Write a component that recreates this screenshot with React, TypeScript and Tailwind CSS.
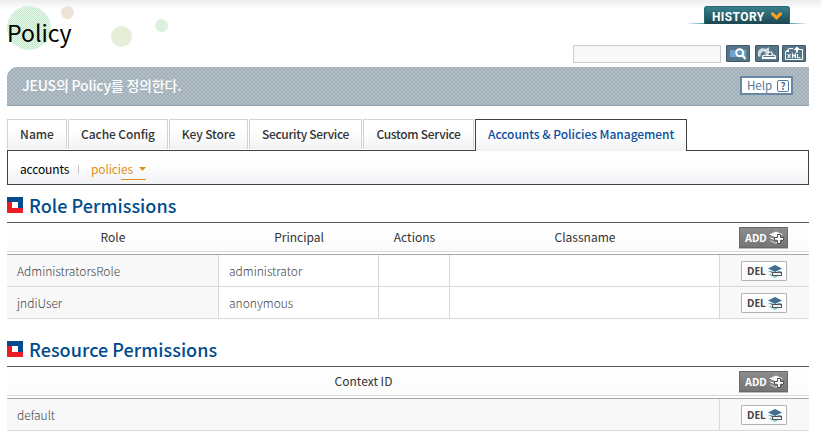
import type { ReactNode } from "react";

const tabs = [
  { label: "Name", box: "w-[60px]", text: "tracking-[0px]" },
  { label: "Cache Config", box: "w-[100px]", text: "tracking-[-0.1px]" },
  { label: "Key Store", box: "w-[79px]", text: "tracking-[-0.1px]" },
  { label: "Security Service", box: "w-[113px]", text: "tracking-[-0.3px]" },
  { label: "Custom Service", box: "w-[111px]", text: "tracking-[-0.3px]" },
];

function TitleBubbles() {
  return (
    <svg className="absolute left-0 top-0" width="180" height="56" viewBox="0 0 180 56">
      <defs>
        <pattern id="dots" width="2" height="2" patternUnits="userSpaceOnUse">
          <rect width="2" height="2" fill="#eefaf0" />
          <rect width="1" height="1" fill="#bde6c4" />
          <rect x="1" y="1" width="1" height="1" fill="#bde6c4" />
        </pattern>
      </defs>
      <circle cx="29" cy="28" r="22" fill="url(#dots)" />
      <circle cx="67.5" cy="12.5" r="6.5" fill="#efe3d8" />
      <circle cx="121.5" cy="36.5" r="10.5" fill="#e6edd8" />
      <circle cx="161.5" cy="25.5" r="6.5" fill="#dbf0dd" />
    </svg>
  );
}

function ToolButton({ children, label }: { children: ReactNode; label: string }) {
  return (
    <button aria-label={label} className="h-[17px] w-6 rounded-[1px] border border-[#40566a] bg-[#557589]">
      <svg width="22" height="15" viewBox="0 0 22 15" className="block">
        {children}
      </svg>
    </button>
  );
}

function SearchIcon() {
  return (
    <>
      <rect x="3" y="4" width="16" height="7" fill="#6ea4cb" />
      <circle cx="12.7" cy="6.7" r="3.5" fill="#5a9acb" stroke="#fff" strokeWidth="2" />
      <path d="M15.5 9.7 18.5 13" stroke="#fff" strokeWidth="2.2" />
    </>
  );
}

function ReloadIcon() {
  return (
    <>
      <path d="M2 10.500V6.500C2.500 3 6 1 10 3l2-1.500h1V7.500H8L9.500 6C6 4.500 4.500 7 4.500 10.500Z" fill="#d5dde2" />
      <path
        d="M6.500 10v2.500h13V10l-3-1.500-1-2.500h-2.500L11.500 8.500 6.500 10Z"
        fill="#557589"
        stroke="#fff"
        strokeWidth="1.200"
      />
      <path d="M6.500 12h13" stroke="#fff" strokeWidth="2" />
      <path d="M10 9.500h6.500" stroke="#fff" />
    </>
  );
}

function XmlIcon() {
  return (
    <>
      <path d="M2.500 13.500V6L6 2.500h4M17 3.500h2.500v10h-17" fill="none" stroke="#fff" />
      <path d="M2 6h4V2.500Z" fill="#fff" />
      <path d="M14 6.500V3" stroke="#fff" strokeWidth="2" />
      <path d="M10.500 4 14 .5 17.500 4Z" fill="#fff" />
      <path
        d="m4.500 8 3 4m0-4-3 4M9.500 12.200V8l1.500 2.500L12.500 8v4.200M14.500 8v3.800h3"
        fill="none"
        stroke="#fff"
        strokeWidth="1.100"
      />
    </>
  );
}

function LayersIcon({ plus }: { plus?: boolean }) {
  return (
    <svg width="15" height="13" viewBox="0 0 15 13" className="block shrink-0">
      {plus ? (
        <>
          <path d="M0 9.500h2l4 2 3-1v2H6Z" fill="#d7d7d7" />
          <path d="M0 6.500h2l5 2 5-2h1L7 10Z" fill="#ececec" />
          <path d="m0 3.500 7-3 7 3-7 3Z" fill="#f6f6f6" />
          <path d="M8.500 3.500h3v3h3v2.800h-3v3.200h-3V9.300h-3V6.500h3Z" fill="#fff" stroke="#4d4d4d" />
        </>
      ) : (
        <>
          <path d="M0 9h3l4 2 5-1 2-1-7 4Z" fill="#7fcdc9" />
          <path d="M0 6h3l4 1.500L11 6h3L7 10Z" fill="#5e9fae" />
          <path d="m0 3.500 7-3.500 7 3.500-7 3.500Z" fill="#41708f" />
          <rect x="4.500" y="7.500" width="9" height="3" fill="#eee" stroke="#555" />
        </>
      )}
    </svg>
  );
}

function AddButton() {
  return (
    <button className="flex h-[21px] w-[49px] items-center gap-[3px] border border-[#686868] bg-linear-to-b from-[#8c8c8c] to-[#757575] pl-[5px] font-['Open_Sans',sans-serif] text-[10px] font-bold text-white shadow-[0_1px_0_#bbb]">
      <span className="w-[21px] text-left">ADD</span>
      <LayersIcon plus />
    </button>
  );
}

function DelButton() {
  return (
    <button className="flex h-5 w-[46px] items-center gap-[3px] rounded-[1px] border border-[#b3b3b3] bg-linear-to-b from-white to-[#fafafa] pl-[5px] font-['Open_Sans',sans-serif] text-[10px] font-bold text-[#444]">
      <span className="w-[18px] text-left">DEL</span>
      <LayersIcon />
    </button>
  );
}

function SectionTitle({ children }: { children: ReactNode }) {
  return (
    <h2 className="flex h-[25px] items-start gap-[6px] text-[18px] font-medium leading-[16px] tracking-[0.05px] text-[#004b8d]">
      <svg width="16" height="16" viewBox="0 0 16 16" className="shrink-0">
        <path d="M0 0h16v11H0Z" fill="#004b8d" />
        <path d="M0 5h5v6h11v5H0Z" fill="#ed1c24" />
        <path d="M5 5h6v6H5Z" fill="#fff" />
      </svg>
      <span>{children}</span>
    </h2>
  );
}

const headRow = "grid h-[33px] border-t border-[#58585a] border-b border-b-[#a6a6a6] text-[#333]";
const headCell = "h-[29px] border-b border-[#d9d9d9] bg-linear-to-b from-white to-[#fbfbfb] text-center leading-[28px]";
const roleCols = "grid-cols-[212px_160px_71px_270px_89px]";
const resCols = "grid-cols-[713px_89px]";
const cell = "h-8 border-r border-b border-[#d9d9d9] pl-[10px] leading-[31px]";
const lastCell = "flex h-8 items-start border-b border-[#d9d9d9] bg-[#f8f8f8] pl-[21px] pt-[6px]";

export default function App() {
  return (
    <div className="relative h-[437px] w-[821px] overflow-hidden bg-white font-['Noto_Sans_CJK_KR',sans-serif] text-[12px] text-[#444]">
      <div className="absolute inset-x-0 top-0 h-[9px] bg-linear-to-b from-[#ececec] to-white" />
      <TitleBubbles />
      <div className="relative flex h-[67px] justify-between pl-[7px] pr-3">
        <h1 className="pt-[16px] text-[23px] leading-[32px] text-black">Policy</h1>
        <div className="flex flex-col items-end">
          <div className="mt-[6px] mr-[1px] flex h-[18px] w-[122px] items-end">
            <div className="h-px w-[18px] bg-linear-to-r from-white to-[#4aa0aa]" />
            <div className="flex h-[18px] w-[86px] items-center gap-[7px] rounded-t-[3px] border border-b-0 border-[#286873] bg-linear-to-b from-[#38808c] to-[#1d4751] pl-[7px]">
              <span className="w-[52px] pt-[2px] font-['Roboto',sans-serif] text-[12px] font-bold leading-none tracking-[0.4px] text-white">
                HISTORY
              </span>
              <svg width="11" height="8" viewBox="0 0 11 8">
                <path d="M0 .5h2.500l3 3 3-3H11v2L5.500 8 0 2.500Z" fill="#f9a11b" />
              </svg>
            </div>
            <div className="h-px w-[18px] bg-linear-to-r from-[#4aa0aa] to-white" />
          </div>
          <div className="mt-[21px] mr-[3px] flex">
            <input aria-label="Search" className="mr-[5px] h-[18px] w-[148px] border border-[#ccc] bg-[#f8f8f8]" />
            <ToolButton label="Search">
              <SearchIcon />
            </ToolButton>
            <div className="w-[5px]" />
            <ToolButton label="Reload">
              <ReloadIcon />
            </ToolButton>
            <div className="w-[3px]" />
            <ToolButton label="XML">
              <XmlIcon />
            </ToolButton>
          </div>
        </div>
      </div>

      <div className="ml-[7px] w-[802px]">
        <div className="flex h-[39px] items-start justify-between rounded-tl-[11px] border-b border-[#93a3ae] bg-[#b0bdc6] bg-[repeating-conic-gradient(#a2afb9_0_25%,#b2bfc7_0_50%)] bg-[size:4px_4px] pl-[15px] pr-4">
          <p className="pt-[8px] text-[14px] font-medium leading-[20px] tracking-[-0.2px] text-white">JEUS의 Policy를 정의한다.</p>
          <button className="mt-[9px] flex h-[19px] w-[53px] items-center gap-[5px] border-2 border-[#6787a3] bg-white pl-[5px] text-[11.5px] text-[#557799]">
            <span className="w-[25px] text-left">Help</span>
            <span className="flex size-3 items-center justify-center rounded-[2px] border border-[#557799] text-[10px] font-bold leading-none">?</span>
          </button>
        </div>

        <nav className="mt-[13px] flex h-8 items-start">
          {tabs.map((t) => (
            <div key={t.label} className={`mr-px h-[30px] border border-b-0 border-[#d3d3d3] bg-linear-to-b from-white from-40% to-[#f1f2f4] text-center leading-[28px] text-[#333] ${t.box}`}>
              <span className={`whitespace-nowrap font-medium ${t.text}`}>{t.label}</span>
            </div>
          ))}
          <div className="relative z-10 h-8 w-[212px] border border-b-0 border-[#3f3f41] bg-linear-to-b from-white from-40% to-[#f1f2f4] pl-[12px] font-medium leading-[28px] tracking-[-0.05px] text-[#0a4f9e]">
            Accounts &amp; Policies Management
          </div>
        </nav>
        <div className="-mt-px flex h-[35px] items-center border border-[#3f3f41] bg-linear-to-b from-white from-40% to-[#f1f2f4] pl-3 pt-[3px]">
          <span className="w-[50px] tracking-[-0.15px] text-black">accounts</span>
          <span className="mx-[8px] h-[9px] w-px bg-[#c4c4c4]" />
          <span className="relative flex w-[60px] items-center pl-[4px] text-[#dd911c]">
            <span className="w-[48px] tracking-[-0.15px]">policies</span>
            <svg width="7" height="4" viewBox="0 0 7 4" className="shrink-0">
              <path d="M0 0h7L3.500 4Z" fill="#dd911c" />
            </svg>
            <span className="absolute -bottom-[2px] left-[34px] h-px w-[25px] bg-[#dd911c]" />
          </span>
        </div>

        <section className="mt-3">
          <SectionTitle>Role Permissions</SectionTitle>
          <div className={`${headRow} ${roleCols}`}>
            {["Role", "Principal", "Actions", "Classname"].map((h) => (
              <div key={h} className={headCell}>{h}</div>
            ))}
            <div className={`${headCell} flex items-start pl-[19px] pt-[4px]`}><AddButton /></div>
          </div>
          {[["AdministratorsRole", "administrator"], ["jndiUser", "anonymous"]].map(([role, principal]) => (
            <div key={role} className={`grid h-8 font-light ${roleCols}`}>
              <div className={`${cell} bg-[#f8f8f8]`}>{role}</div>
              <div className={cell}>{principal}</div>
              <div className={cell} />
              <div className={cell} />
              <div className={lastCell}><DelButton /></div>
            </div>
          ))}
        </section>

        <section className="mt-[22px]">
          <SectionTitle>Resource Permissions</SectionTitle>
          <div className={`${headRow} ${resCols}`}>
            <div className={headCell}>Context ID</div>
            <div className={`${headCell} flex items-start pl-[19px] pt-[4px]`}><AddButton /></div>
          </div>
          <div className={`grid h-8 font-light ${resCols}`}>
            <div className={`${cell} bg-[#f8f8f8]`}>default</div>
            <div className={lastCell}><DelButton /></div>
          </div>
        </section>
      </div>
    </div>
  );
}
